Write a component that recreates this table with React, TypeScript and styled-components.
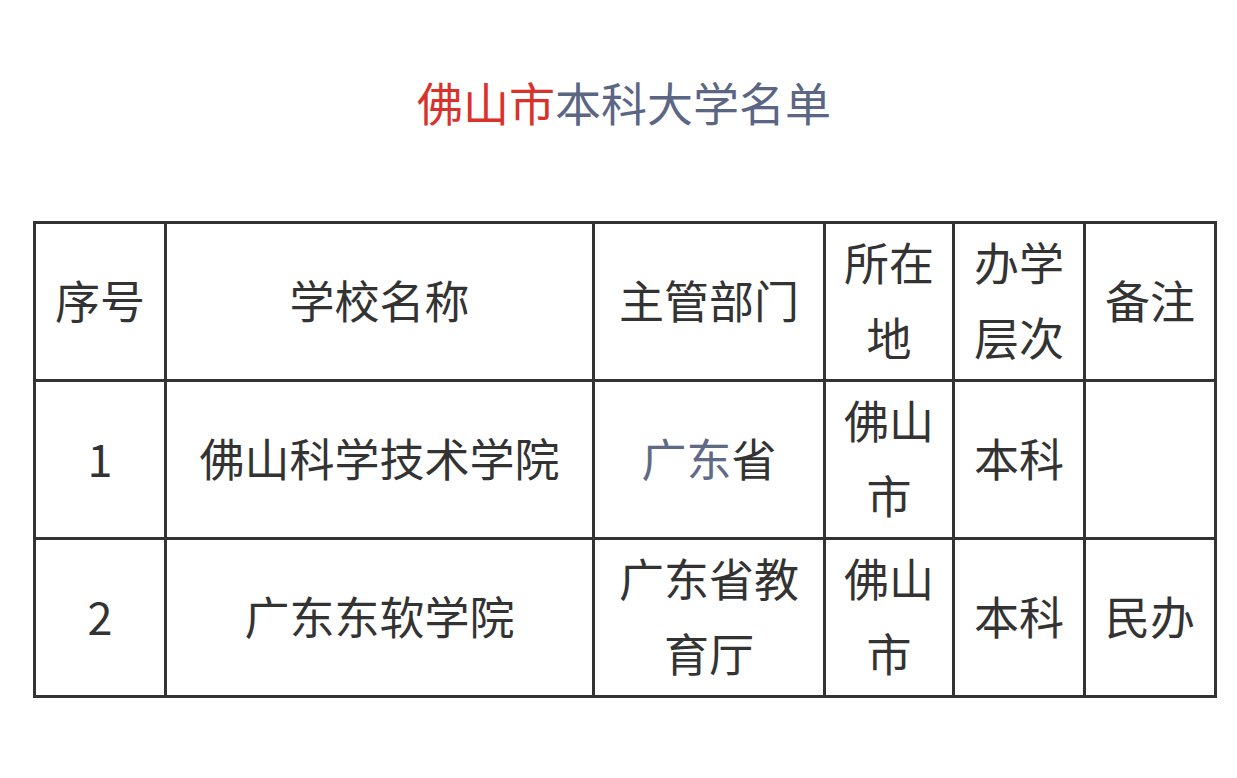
import React, { FunctionComponent, ReactElement } from 'react'
import styled, { createGlobalStyle } from 'styled-components'

interface School {
  index: number
  name: string
  department: string
  mutedPrefix?: number
  location: string
  level: string
  note: string
}

const schools: School[] = [
  {
    index: 1,
    name: '佛山科学技术学院',
    department: '广东省',
    mutedPrefix: 2,
    location: '佛山市',
    level: '本科',
    note: '',
  },
  {
    index: 2,
    name: '广东东软学院',
    department: '广东省教育厅',
    location: '佛山市',
    level: '本科',
    note: '民办',
  },
]

const columns = [131, 428, 231, 129, 131, 131]

const App: FunctionComponent = (): ReactElement => {
  const renderDepartment = (school: School): ReactElement | string => {
    if (!school.mutedPrefix) return school.department
    return (
      <>
        <Muted>{school.department.slice(0, school.mutedPrefix)}</Muted>
        {school.department.slice(school.mutedPrefix)}
      </>
    )
  }

  return (
    <>
      <GlobalStyle />
      <Page>
        <Title>
          <Highlight>佛山市</Highlight>本科大学名单
        </Title>
        <TableElement>
          <colgroup>
            {columns.map((width, index) => (
              <col key={index} style={{ width }} />
            ))}
          </colgroup>
          <thead>
            <tr>
              <th>序号</th>
              <th>学校名称</th>
              <th>主管部门</th>
              <th>所在地</th>
              <th>办学层次</th>
              <th>备注</th>
            </tr>
          </thead>
          <tbody>
            {schools.map((school) => (
              <tr key={school.index}>
                <td>{school.index}</td>
                <td>{school.name}</td>
                <td>{renderDepartment(school)}</td>
                <td>{school.location}</td>
                <td>{school.level}</td>
                <td>{school.note}</td>
              </tr>
            ))}
          </tbody>
        </TableElement>
      </Page>
    </>
  )
}

const GlobalStyle = createGlobalStyle`
  body {
    margin: 0;
    background: #ffffff;
    font-family: "Noto Sans CJK SC", "Noto Sans", sans-serif;
    color: #333333;
  }
`

const Page = styled.div`
  width: 1237px;
  padding: 70px 22px 0 33px;
  box-sizing: border-box;
`

const Title = styled.h1`
  margin: 0 0 89px;
  font-size: 46px;
  line-height: 62px;
  font-weight: 400;
  text-align: center;
  color: #5b6584;
`

const Highlight = styled.span`
  color: #d8322b;
`

const Muted = styled.span`
  color: #606a86;
`

const TableElement = styled.table`
  width: 1182px;
  table-layout: fixed;
  border-collapse: collapse;
  font-size: 45px;
  line-height: 75px;
  color: #333333;

  th,
  td {
    border: 3px solid #333333;
    padding: 0 12px 5px;
    height: 150px;
    font-weight: 400;
    text-align: center;
    vertical-align: middle;
  }
`

export default App
